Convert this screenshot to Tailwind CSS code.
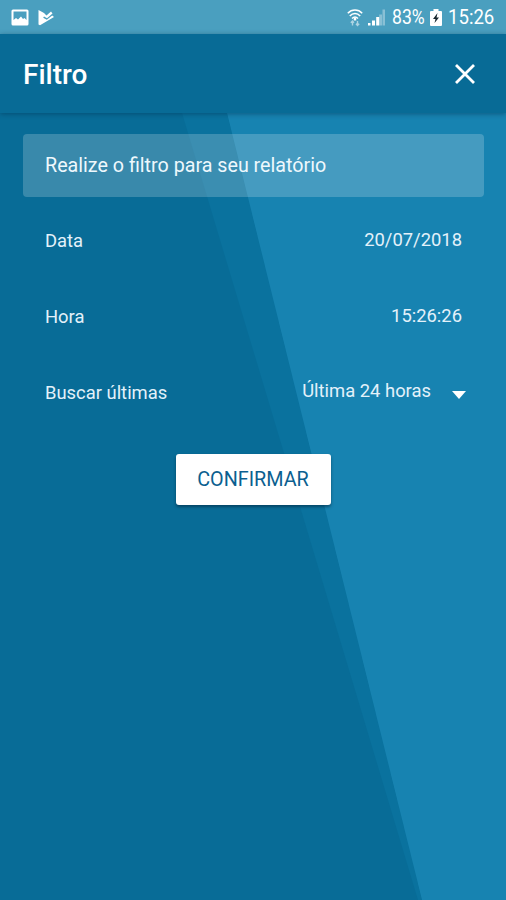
<!DOCTYPE html>
<html lang="pt-BR">
  <head>
    <meta charset="UTF-8" />
    <meta name="viewport" content="width=device-width, initial-scale=1.0" />
    <title>Filtro</title>
    <script src="https://cdn.jsdelivr.net/npm/@tailwindcss/browser@4"></script>
  </head>
  <body class="font-[Roboto,sans-serif] text-white">
    <div class="relative isolate flex h-[900px] w-[506px] flex-col overflow-hidden bg-[#086c97]">
      <!-- Background -->
      <svg class="absolute inset-0 -z-10" width="506" height="900" viewBox="0 0 506 900">
        <polygon points="182,113 227,113 422,900 418,900" fill="#0a729e" />
        <polygon points="227,113 506,113 506,900 422,900" fill="#1783b1" />
      </svg>

      <!-- Status bar -->
      <div class="flex h-[34px] shrink-0 items-center bg-[#4a9fbf] pl-[11px] pr-3">
        <svg width="18" height="17" viewBox="0 0 18 17">
          <path fill="white" fill-rule="evenodd" d="M2 .5h14a1.500 1.500 0 0 1 1.500 1.500v13a1.500 1.500 0 0 1-1.500 1.500H2A1.500 1.500 0 0 1 .5 15V2A1.500 1.500 0 0 1 2 .5zM2.500 2.500v8.500l2.500-2 2 1.500 3-3 2 2.500 1.500-1 2 2V2.500z" />
        </svg>
        <svg class="ml-[9px]" width="16" height="17" viewBox="0 0 16 17">
          <path fill="white" d="M.5 1 6 4l2.500 2.500L13 2.500l1.500 2L9 9.300 6 7.500l-.8 1.300 3.600 2 5.400-4.300 1.800 1.500L2 16.200.5 15.500z" />
        </svg>
        <svg class="ml-auto" width="16" height="19" viewBox="0 0 16 19" fill="none" stroke="white" stroke-width="1.500">
          <path d="M.8 5.200c4-4.300 10.400-4.300 14.400 0M2.800 8c3-3.300 7.400-3.300 10.400 0M5 10.500c2-2 4-2 6 0" />
          <path d="M8 9.500v3" stroke-width="2.500" />
          <path stroke-width="1.400" d="M5.500 17.500v-4.500M3.800 14.800l1.700-1.800 1.500 1.800M10.500 13v4.500M9 15.700l1.500 1.800 1.700-1.800" opacity=".55" />
        </svg>
        <svg class="ml-[5px]" width="18" height="18" viewBox="0 0 18 18" fill="white">
          <path d="M0 15h2.500v2.500H0zM4 12.500h3v5H4zM8.200 9h3v8.500h-3z" />
          <path d="M11.200 6.500h2.800v11h-2.800zM14.500 1.500h2.500v16h-2.500z" opacity=".35" />
        </svg>
        <span class="ml-[6px] w-[34px] origin-left scale-x-[.88] whitespace-nowrap text-[20px] leading-[36px]">83%</span>
        <svg class="ml-[4px]" width="12" height="17" viewBox="0 0 12 17">
          <path fill="white" d="M3.500 0h5v2H11a1 1 0 0 1 1 1v13a1 1 0 0 1-1 1H1a1 1 0 0 1-1-1V3a1 1 0 0 1 1-1h2.500z" />
          <path fill="#17262d" d="M7.500 4 3 10h2.500L4.500 14 9 8.500H6.500z" />
        </svg>
        <span class="ml-[6px] w-[46px] origin-left scale-x-[.93] whitespace-nowrap text-[20px] leading-[36px]">15:26</span>
      </div>

      <!-- Header -->
      <header class="flex h-[79px] shrink-0 items-center justify-between bg-[#086b96] pl-[23px] pr-[31px] shadow-[0_1px_5px_rgba(0,40,70,0.45)]">
        <h1 class="pt-[2px] text-[28px] font-medium">Filtro</h1>
        <button aria-label="Fechar">
          <svg width="20" height="20" viewBox="0 0 20 20" fill="none" stroke="white" stroke-width="2.800">
            <path d="M1 1l18 18M19 1 1 19" />
          </svg>
        </button>
      </header>

      <!-- Form -->
      <main class="flex flex-col px-[23px] pt-[21px] text-[18.400px] text-[#e3f1fa]">
        <p class="mr-[-1px] flex h-[63px] items-center rounded-[4px] bg-white/20 px-[22px] text-[19.700px] text-[#eef8fd]">Realize o filtro para seu relatório</p>
        <div class="flex flex-col pl-[22px] pr-[21px] pt-[6px]">
          <div class="flex h-[76px] items-center justify-between">
            <span>Data</span>
            <span class="-mt-[2px]">20/07/2018</span>
          </div>
          <div class="flex h-[76px] items-center justify-between">
            <span>Hora</span>
            <span class="-mt-[2px]">15:26:26</span>
          </div>
          <div class="flex h-[76px] items-center">
            <span>Buscar últimas</span>
            <span class="-mt-[5px] ml-auto">Última 24 horas</span>
            <svg class="-mr-[4px] ml-[21px] mt-[3px]" width="14" height="8" viewBox="0 0 14 8">
              <path d="M0 0h14L7 8z" fill="white" />
            </svg>
          </div>
        </div>
        <button class="mt-[23px] h-[51px] w-[155px] self-center rounded-[3px] bg-white text-[19.800px] text-[#0b5f90] shadow-[0_2px_3px_rgba(0,30,50,0.5)]">CONFIRMAR</button>
      </main>
    </div>
  </body>
</html>
